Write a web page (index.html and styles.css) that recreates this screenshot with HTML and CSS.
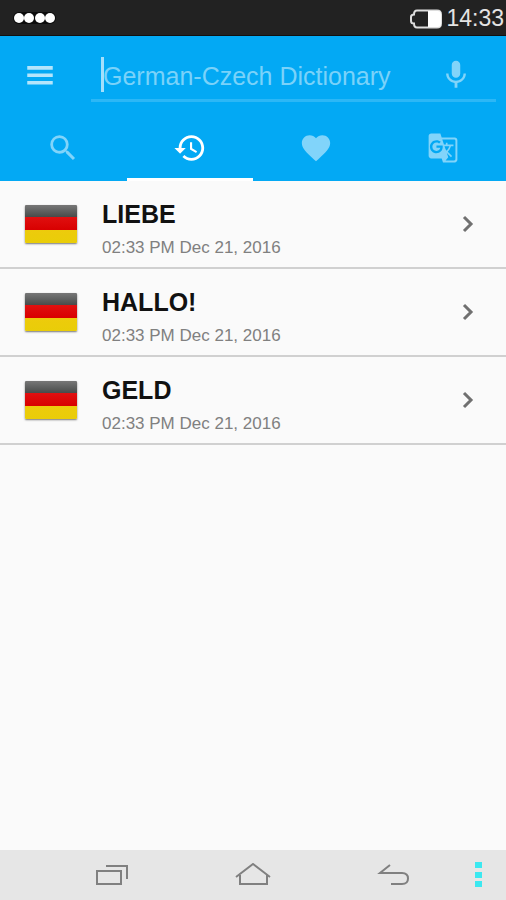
FILE: index.html
```html
<!DOCTYPE html>
<html lang="en">
<head>
<meta charset="utf-8">
<meta name="viewport" content="width=device-width, initial-scale=1">
<title>German-Czech Dictionary</title>
<link rel="stylesheet" href="styles.css">
</head>
<body>
<div class="status">
  <svg class="signal" viewBox="0 0 44 14" aria-hidden="true"><path d="M7 7h31" stroke="#0c0c0c" stroke-width="12" stroke-linecap="round"/><circle cx="7" cy="7" r="5"/><circle cx="17" cy="7" r="5"/><circle cx="28" cy="7" r="5"/><circle cx="38" cy="7" r="5"/></svg>
  <div class="status-right">
    <svg class="battery" viewBox="0 0 34 22" aria-hidden="true"><path d="M8 2.500h20q4 0 4 4v9q0 4-4 4H8q-3 0-3-4-3 0-3-2.500V9q0-2.500 3-2.500 0-4 3-4z" fill="#222" stroke="#ddd" stroke-width="2"/><path d="M19 3h10q3 0 3 3v10q0 3-3 3H19z" fill="#fff"/></svg>
    <span>14:33</span>
  </div>
</div>
<header class="header">
  <div class="search-row">
    <button class="icon-button menu" aria-label="Menu"><svg class="icon" viewBox="0 0 24 24"><path d="M3 18h18v-2.500H3V18zm0-5.250h18v-2.500H3v2.500zM3 5v2.500h18V5H3z"/></svg></button>
    <div class="field">
      <input type="text" aria-label="Search" placeholder="German-Czech Dictionary">
      <button class="icon-button mic" aria-label="Voice search"><svg class="icon" viewBox="0 0 24 24"><path d="M12 14c1.660 0 3-1.340 3-3V5c0-1.660-1.340-3-3-3S9 3.340 9 5v6c0 1.660 1.340 3 3 3zm5.300-3c0 3-2.540 5.100-5.300 5.100S6.700 14 6.700 11H5c0 3.410 2.720 6.230 6 6.720V21h2v-3.280c3.280-.48 6-3.300 6-6.720h-1.700z"/></svg></button>
    </div>
  </div>
  <nav class="tabs">
    <button class="tab" aria-label="Search"><svg class="icon" viewBox="0 0 24 24"><path d="M15.500 14h-.79l-.28-.27A6.470 6.470 0 0 0 16 9.500 6.500 6.500 0 1 0 9.500 16c1.610 0 3.090-.59 4.230-1.570l.27.28v.79l5 4.990L20.490 19l-4.990-5zm-6 0C7.010 14 5 11.990 5 9.500S7.010 5 9.500 5 14 7.010 14 9.500 11.990 14 9.500 14z"/></svg></button>
    <button class="tab active" aria-label="History"><svg class="icon" viewBox="0 0 24 24"><path d="M13 3c-4.970 0-9 4.030-9 9H1l3.890 3.890.07.14L9 12H6c0-3.870 3.130-7 7-7s7 3.130 7 7-3.130 7-7 7c-1.930 0-3.680-.79-4.940-2.060l-1.420 1.420C8.270 19.990 10.510 21 13 21c4.970 0 9-4.030 9-9s-4.030-9-9-9zm-1 5v5l4.280 2.540.72-1.210-3.500-2.080V8H12z"/></svg></button>
    <button class="tab" aria-label="Favourites"><svg class="icon" viewBox="0 0 24 24"><path d="M12 21.350l-1.450-1.320C5.400 15.360 2 12.280 2 8.500 2 5.420 4.420 3 7.500 3c1.740 0 3.410.81 4.500 2.090C13.090 3.810 14.760 3 16.500 3 19.580 3 22 5.420 22 8.500c0 3.780-3.400 6.860-8.550 11.540L12 21.350z"/></svg></button>
    <button class="tab" aria-label="Translate"><svg class="icon" viewBox="-1 -1 26 26"><path d="M21 4H11l-1-3H3c-1.100 0-2 .9-2 2v15c0 1.100.9 2 2 2h8l1 3h9c1.100 0 2-.9 2-2V6c0-1.100-.9-2-2-2zM7 16c-2.760 0-5-2.240-5-5s2.240-5 5-5c1.350 0 2.480.5 3.350 1.300L9.030 8.570c-.38-.36-1.040-.78-2.030-.78-1.740 0-3.150 1.440-3.150 3.210S5.260 14.210 7 14.210c2.010 0 2.840-1.440 2.920-2.410H7v-1.710h4.680c.07.31.12.61.12 1.020C11.800 13.970 9.890 16 7 16zm6.170-5.420h3.700c-.43 1.250-1.110 2.430-2.050 3.470-.31-.35-.6-.72-.86-1.100l-.79-2.370zm8.330 9.920c0 .55-.45 1-1 1H14l2-2.500-1.040-3.100 3.100 3.100.92-.92-3.300-3.250.02-.02c1.130-1.250 1.930-2.690 2.400-4.220H20v-1.300h-4.530V8h-1.290v1.290h-1.440L11.460 5.500h9.040c.55 0 1 .45 1 1v14z"/></svg></button>
  </nav>
</header>
<main>
  <ul class="list">
    <li><a class="row" href="#">
      <span class="flag"></span>
      <span class="text"><span class="word">LIEBE</span><span class="date">02:33 PM Dec 21, 2016</span></span>
      <svg class="chevron" viewBox="0 0 12 18" aria-hidden="true"><path d="M2 2l7 7-7 7"/></svg>
    </a></li>
    <li><a class="row" href="#">
      <span class="flag"></span>
      <span class="text"><span class="word">HALLO!</span><span class="date">02:33 PM Dec 21, 2016</span></span>
      <svg class="chevron" viewBox="0 0 12 18" aria-hidden="true"><path d="M2 2l7 7-7 7"/></svg>
    </a></li>
    <li><a class="row" href="#">
      <span class="flag"></span>
      <span class="text"><span class="word">GELD</span><span class="date">02:33 PM Dec 21, 2016</span></span>
      <svg class="chevron" viewBox="0 0 12 18" aria-hidden="true"><path d="M2 2l7 7-7 7"/></svg>
    </a></li>
  </ul>
</main>
<footer class="navbar">
  <span></span>
  <button aria-label="Recent apps"><svg width="34" height="24" viewBox="0 0 34 24"><path d="M2 8h24v13H2zM11 3h21v13"/></svg></button>
  <button aria-label="Home"><svg width="36" height="24" viewBox="0 0 36 24"><path d="M1 14L18 1l17 13M5 12v9h27v-9"/></svg></button>
  <button aria-label="Back"><svg width="34" height="24" viewBox="0 0 34 24"><path d="M13 2L3 10h22q6 0 6 5.500T25 21H14"/></svg></button>
  <button class="more" aria-label="More options"><svg width="8" height="26" viewBox="0 0 8 26"><path d="M1 0h7v6H1zM1 10h7v6H1zM1 19h7v6H1z"/></svg></button>
</footer>
</body>
</html>
```
FILE: styles.css
```css
* { box-sizing: border-box; }

body {
  margin: 0;
  min-height: 100vh;
  display: flex;
  flex-direction: column;
  background: #fafafa;
  font-family: "Liberation Sans", Arial, sans-serif;
}

button {
  padding: 0;
  border: 0;
  background: none;
  color: inherit;
  display: flex;
  align-items: center;
  justify-content: center;
}

svg { display: block; }

.status {
  height: 36px;
  padding: 0 2px 0 12px;
  display: flex;
  align-items: center;
  justify-content: space-between;
  background: #222;
  border-bottom: 1px solid #111;
  color: #e4e4e4;
  font-size: 23px;
}

.signal {
  width: 44px;
  height: 14px;
  fill: #fff;
}

.status-right {
  display: flex;
  align-items: center;
  gap: 3px;
  padding-top: 2px;
}

.battery {
  width: 34px;
  height: 22px;
}

.header {
  background: #03a9f4;
  color: #fff;
}

.icon {
  width: 34px;
  height: 34px;
  fill: currentColor;
}

.search-row {
  display: flex;
  align-items: center;
  gap: 34px;
  padding: 14px 10px 0 23px;
}

.menu { opacity: 0.7; }

.field {
  position: relative;
  flex: 1;
  min-width: 0;
  display: flex;
  align-items: center;
  height: 52px;
  padding: 0 23px 0 12px;
  border-bottom: 3px solid #2cb7f6;
}

/* text cursor at the start of the empty field */
.field::before {
  content: "";
  position: absolute;
  left: 10px;
  top: 7px;
  width: 3px;
  height: 35px;
  background: #a4dffb;
}

.field input {
  flex: 1;
  min-width: 0;
  padding: 4px 0 0;
  border: 0;
  outline: 0;
  background: none;
  color: #fff;
  font: inherit;
  font-size: 25px;
}

.field input::placeholder {
  color: #7ad2f9;
  opacity: 1;
}

.mic { opacity: 0.5; }

.tabs {
  display: grid;
  grid-template-columns: repeat(4, 1fr);
  height: 79px;
}

.tab {
  padding-top: 16px;
  border-bottom: 3px solid transparent;
  color: #81d4fa;
}

.tab.active {
  color: #fff;
  border-color: #fff;
}

.list {
  margin: 0;
  padding: 0;
  list-style: none;
}

.row {
  display: flex;
  align-items: center;
  gap: 25px;
  height: 88px;
  padding: 0 32px 0 25px;
  border-bottom: 2px solid #d0d0d0;
  color: #111;
  text-decoration: none;
}

.flag {
  width: 52px;
  height: 38px;
  border-radius: 1px;
  background: linear-gradient(#777 0, #484b4a 12px, #e01010 12px, #d80000 25px, #edcb0c 25px, #e9cd08 100%);
  box-shadow: 0 1px 2px #777;
}

.text {
  flex: 1;
  display: flex;
  flex-direction: column;
  gap: 9px;
  padding-top: 8px;
}

.word {
  font-size: 25px;
  font-weight: 700;
  line-height: 30px;
}

.date {
  color: #808080;
  font-size: 17px;
  line-height: 20px;
}

.chevron {
  width: 12px;
  height: 18px;
  fill: none;
  stroke: #707070;
  stroke-width: 3;
}

.navbar {
  margin-top: auto;
  height: 50px;
  display: grid;
  grid-template-columns: 6fr 20fr 20fr 20fr 6fr;
  background: #e6e6e6;
  color: #808080;
}

.navbar svg {
  fill: none;
  stroke: currentColor;
  stroke-width: 2;
}

.navbar .more { padding-right: 14px; }

.navbar .more svg {
  fill: #3ce8f0;
  stroke: none;
}
```
